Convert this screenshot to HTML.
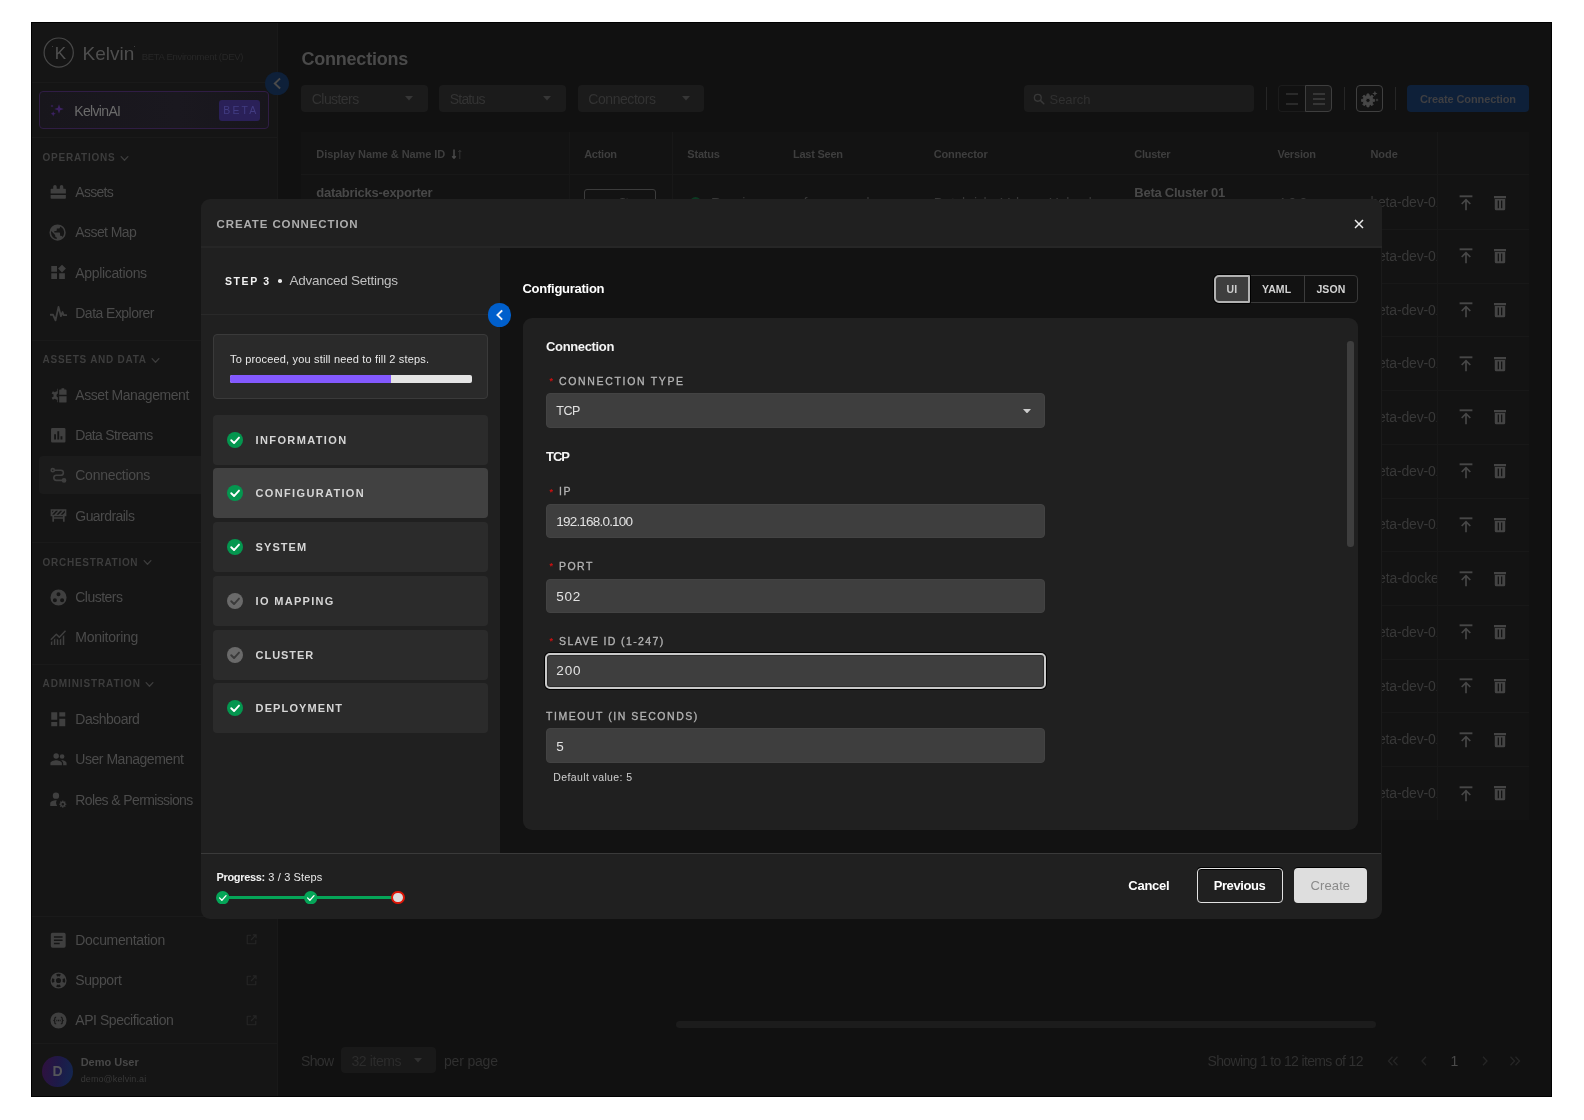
<!DOCTYPE html>
<html lang="en"><head><meta charset="utf-8"><title>Kelvin - Connections</title>
<style>
html,body{margin:0;padding:0;background:#fff;}
body{width:1584px;height:1120px;position:relative;overflow:hidden;font-family:"Liberation Sans",Arial,sans-serif;}
#root{position:absolute;left:0;top:0;width:1584px;height:1120px;will-change:transform;}
.b{position:absolute;box-sizing:border-box;display:block;}
.t{position:absolute;white-space:nowrap;display:block;}
</style></head><body>
<div id="root">
<div class="b" style="left:31.00px;top:22.00px;width:1521.00px;height:1075.00px;background:#111111;border:1px solid #000;"></div>
<div class="b" style="left:32.00px;top:23.00px;width:246.00px;height:1073.00px;background:#151515;border-right:1px solid #191919;"></div>
<svg class="b" style="left:43.00px;top:37.00px;" width="32" height="32" viewBox="0 0 32 32"><circle cx="15.7" cy="15.6" r="14.6" fill="none" stroke="#484848" stroke-width="1.2"/></svg>
<span class="t" style="left:54.80px;top:44px;font-size:17px;line-height:20px;color:#505050;letter-spacing:-0.739px;">K</span>
<div class="b" style="left:52.00px;top:45.60px;width:1.30px;height:1.30px;background:#505050;border-radius:1px;"></div>
<span class="t" style="left:82.50px;top:44px;font-size:19px;line-height:20px;color:#4e4e4e;letter-spacing:0.010px;">Kelvin</span>
<div class="b" style="left:134.20px;top:45.80px;width:1.30px;height:1.30px;background:#4e4e4e;border-radius:1px;"></div>
<span class="t" style="left:141.70px;top:47px;font-size:9.5px;line-height:20px;color:#272727;letter-spacing:-0.298px;">BETA Environment (DEV)</span>
<div class="b" style="left:32.00px;top:82.00px;width:245.00px;height:1.00px;background:#1a1a1a;"></div>
<div class="b" style="left:39.00px;top:91.30px;width:230.30px;height:38.00px;background:linear-gradient(90deg,#18161c,#1a181f 60%,#18161c);border:1px solid #301d45;border-radius:4px;"></div>
<svg class="b" style="left:49.00px;top:102.00px;" width="16" height="16" viewBox="0 0 16 16"><path d="M10 2.2 L11.2 5.8 L14.8 7 L11.2 8.2 L10 11.8 L8.8 8.2 L5.2 7 L8.8 5.8Z M4.2 9.2 L4.9 11.1 L6.8 11.8 L4.9 12.5 L4.2 14.4 L3.5 12.5 L1.6 11.8 L3.5 11.1Z M3 2.4 L3.45 3.55 L4.6 4 L3.45 4.45 L3 5.6 L2.55 4.45 L1.4 4 L2.55 3.55Z" fill="#3c2263"/></svg>
<span class="t" style="left:74.30px;top:101px;font-size:14px;line-height:20px;color:#6b6b6b;letter-spacing:-0.666px;">KelvinAI</span>
<div class="b" style="left:219.00px;top:100.00px;width:40.50px;height:20.50px;background:#2a2058;border-radius:3px;"></div>
<span class="t" style="left:223.30px;top:100px;font-size:10.5px;line-height:20px;color:#423c82;letter-spacing:2.085px;padding-left:0">BETA</span>
<div class="b" style="left:32.00px;top:137.00px;width:245.00px;height:1.00px;background:#1a1a1a;"></div>
<div class="b" style="left:265.30px;top:71.80px;width:23.40px;height:23.40px;background:#0e2039;border-radius:50%;"></div>
<svg class="b" style="left:265.50px;top:72.00px;" width="23" height="23" viewBox="0 0 23 23"><path d="M13.400 7.100 L8.800 11.500 L13.400 15.900" fill="none" stroke="#4a4a4a" stroke-width="1.900" stroke-linecap="square" stroke-linejoin="miter"/></svg>
<span class="t" style="left:42.60px;top:148px;font-size:10px;line-height:20px;color:#3d3d3d;font-weight:700;letter-spacing:0.736px;">OPERATIONS</span>
<svg class="b" style="left:119.70px;top:153.50px;" width="9" height="9" viewBox="0 0 9 9"><path d="M1.1 2.600 L4.5 6.200 L7.900 2.600" fill="none" stroke="#3d3d3d" stroke-width="1.3" stroke-linecap="round" stroke-linejoin="round"/></svg>
<svg class="b" style="left:49.75px;top:184.05px;" width="16.5" height="16.5" viewBox="0 0 16 16"><g fill="#3f3f3f" stroke="#3f3f3f" stroke-width="0" color="#3f3f3f"><path d="M1.400 4.600h1.700V2.700a1.700 1.700 0 0 1 3.400 0v1.900h3V2.700a1.700 1.700 0 0 1 3.400 0v1.900h1.700a.8.800 0 0 1 .8.800v3.800H.6V5.400a.8.8 0 0 1 .8-.8zM.6 10.600h14.800v3a.8.8 0 0 1-.8.800H1.400a.8.8 0 0 1-.8-.8z"/></g></svg>
<span class="t" style="left:75.30px;top:182px;font-size:14px;line-height:20px;color:#4b4b4b;letter-spacing:-0.723px;">Assets</span>
<svg class="b" style="left:49.40px;top:224.00px;" width="17.2" height="17.2" viewBox="0 0 16 16"><g fill="#3f3f3f" stroke="#3f3f3f" stroke-width="0" color="#3f3f3f"><path fill-rule="evenodd" d="M8 .4a7.600 7.600 0 1 0 0 15.200A7.600 7.600 0 0 0 8 .4zM1.900 8c0-.5.070-1 .18-1.400L5.700 10.200v.76c0 .84.700 1.520 1.520 1.520v1.560A6.100 6.100 0 0 1 1.900 8zm10.600 4.100a1.500 1.500 0 0 0-1.450-1.060h-.76V8.760a.76.760 0 0 0-.76-.76H4.960V6.480h1.520a.76.760 0 0 0 .76-.76V4.200h1.520c.84 0 1.520-.68 1.520-1.520v-.31A6.090 6.090 0 0 1 12.500 12.100z"/></g></svg>
<span class="t" style="left:75.30px;top:222px;font-size:14px;line-height:20px;color:#4b4b4b;letter-spacing:-0.580px;">Asset Map</span>
<svg class="b" style="left:49.50px;top:264.40px;" width="17" height="17" viewBox="0 0 16 16"><g fill="#3f3f3f" stroke="#3f3f3f" stroke-width="0" color="#3f3f3f"><path d="M1.200 1.800h5.400v5.400H1.200zM1.200 8.800h5.400v5.400H1.200zM8.600 8.800H14v5.400H8.600zM11.300 0.600l3.700 3.700-3.700 3.700-3.700-3.700z"/></g></svg>
<span class="t" style="left:75.30px;top:263px;font-size:14px;line-height:20px;color:#4b4b4b;letter-spacing:-0.335px;">Applications</span>
<svg class="b" style="left:49.50px;top:304.80px;" width="17" height="17" viewBox="0 0 16 16"><g fill="#3f3f3f" stroke="#3f3f3f" stroke-width="0" color="#3f3f3f"><path d="M.5 9.200h2.400l2.300 5.200L8 1.800l2.300 8.700 1.500-3.900 1.100 3h2.600" fill="none" stroke-width="1.700" stroke-linejoin="round" stroke-linecap="round"/></g></svg>
<span class="t" style="left:75.30px;top:303px;font-size:14px;line-height:20px;color:#4b4b4b;letter-spacing:-0.533px;">Data Explorer</span>
<div class="b" style="left:32.00px;top:340.00px;width:245.00px;height:1.00px;background:#1a1a1a;"></div>
<span class="t" style="left:42.60px;top:350px;font-size:10px;line-height:20px;color:#3d3d3d;font-weight:700;letter-spacing:0.732px;">ASSETS AND DATA</span>
<svg class="b" style="left:151.10px;top:355.70px;" width="9" height="9" viewBox="0 0 9 9"><path d="M1.1 2.600 L4.5 6.200 L7.900 2.600" fill="none" stroke="#3d3d3d" stroke-width="1.3" stroke-linecap="round" stroke-linejoin="round"/></svg>
<svg class="b" style="left:49.50px;top:386.50px;" width="17" height="17" viewBox="0 0 16 16"><g fill="#3f3f3f" stroke="#3f3f3f" stroke-width="0" color="#3f3f3f"><path d="M9.400 2.400h1.400V1.200h2.600v1.200h1.400a.8.800 0 0 1 .8.800v4H8.600v-4a.8.8 0 0 1 .8-.8zM8.600 8.800h7v5a.8.8 0 0 1-.8.800H9.400a.8.8 0 0 1-.8-.8z"/><path d="M6.800 1.600v2.500a3.600 3.600 0 0 0-2.200.900L2.700 3.900 1.500 6l1.900 1.100a3.600 3.600 0 0 0 0 1.800L1.500 10l1.200 2.100 1.900-1.100a3.600 3.600 0 0 0 2.200.9v2.500h.6V9.800a1.900 1.900 0 0 1 0-3.600V1.600z"/></g></svg>
<span class="t" style="left:75.30px;top:385px;font-size:14px;line-height:20px;color:#4b4b4b;letter-spacing:-0.441px;">Asset Management</span>
<svg class="b" style="left:49.75px;top:427.05px;" width="16.5" height="16.5" viewBox="0 0 16 16"><g fill="#3f3f3f" stroke="#3f3f3f" stroke-width="0" color="#3f3f3f"><path fill-rule="evenodd" d="M2.200 1h11.600A1.200 1.200 0 0 1 15 2.200v11.600A1.200 1.200 0 0 1 13.800 15H2.200A1.200 1.200 0 0 1 1 13.800V2.200A1.200 1.200 0 0 1 2.200 1zM4 7v5h1.800V7zM7.100 4v8h1.800V4zM10.200 9v3H12V9z"/></g></svg>
<span class="t" style="left:75.30px;top:425px;font-size:14px;line-height:20px;color:#4b4b4b;letter-spacing:-0.690px;">Data Streams</span>
<div class="b" style="left:39.00px;top:456.30px;width:232.00px;height:37.30px;background:#1b1b1b;border-radius:4px;"></div>
<svg class="b" style="left:49.50px;top:467.10px;" width="17" height="17" viewBox="0 0 16 16"><g fill="#3f3f3f" stroke="#3f3f3f" stroke-width="0" color="#3f3f3f"><g fill="none" stroke-width="1.500" stroke-linecap="round"><circle cx="2.600" cy="3" r="1.500"/><circle cx="13.200" cy="12.600" r="1.500" fill="currentColor"/><path d="M4.400 3h5.800a2.400 2.400 0 0 1 0 4.800H6a2.400 2.400 0 0 0 0 4.800h5.200"/></g></g></svg>
<span class="t" style="left:75.30px;top:465px;font-size:14px;line-height:20px;color:#4b4b4b;letter-spacing:-0.283px;">Connections</span>
<svg class="b" style="left:49.50px;top:507.40px;" width="17" height="17" viewBox="0 0 16 16"><g fill="#3f3f3f" stroke="#3f3f3f" stroke-width="0" color="#3f3f3f"><path fill-rule="evenodd" d="M.600 2.200h14.800v6.400h-1.600v5.200h-1.600V11H3.800v2.800H2.200V8.600H.6zM3.800 8.600v1h8.400v-1zM2 3.600v1.600l1.600-1.600zm3.600 0L2 7.200h2l3.600-3.600zm4 0L6 7.200h2l3.600-3.600zm4 0L10 7.200h2l2-2V3.600z"/></g></svg>
<span class="t" style="left:75.30px;top:506px;font-size:14px;line-height:20px;color:#4b4b4b;letter-spacing:-0.553px;">Guardrails</span>
<div class="b" style="left:32.00px;top:542.00px;width:245.00px;height:1.00px;background:#1a1a1a;"></div>
<span class="t" style="left:42.60px;top:553px;font-size:10px;line-height:20px;color:#3d3d3d;font-weight:700;letter-spacing:0.710px;">ORCHESTRATION</span>
<svg class="b" style="left:142.70px;top:558.40px;" width="9" height="9" viewBox="0 0 9 9"><path d="M1.1 2.600 L4.5 6.200 L7.900 2.600" fill="none" stroke="#3d3d3d" stroke-width="1.3" stroke-linecap="round" stroke-linejoin="round"/></svg>
<svg class="b" style="left:49.50px;top:588.80px;" width="17" height="17" viewBox="0 0 16 16"><g fill="#3f3f3f" stroke="#3f3f3f" stroke-width="0" color="#3f3f3f"><path fill-rule="evenodd" d="M8 .4a7.600 7.600 0 1 0 0 15.200A7.600 7.600 0 0 0 8 .4zM8 3a1.900 1.900 0 1 1 0 3.800A1.900 1.900 0 0 1 8 3zM4.600 8.600a1.900 1.900 0 1 1 0 3.800 1.900 1.900 0 0 1 0-3.800zm6.800 0a1.900 1.900 0 1 1 0 3.800 1.900 1.900 0 0 1 0-3.800z"/></g></svg>
<span class="t" style="left:75.30px;top:587px;font-size:14px;line-height:20px;color:#4b4b4b;letter-spacing:-0.535px;">Clusters</span>
<svg class="b" style="left:49.50px;top:629.10px;" width="17" height="17" viewBox="0 0 16 16"><g fill="#3f3f3f" stroke="#3f3f3f" stroke-width="0" color="#3f3f3f"><path d="M.800 15V12.400l1.400-1.400V15zM3.600 15V10l1.400-1.400V15zM6.400 15V9l1.400 1.400V15zM9.200 15V10l1.400-1.400V15zM12 15V7l1.400-1.400V15z"/><path d="M.800 10.200L6 5l2.800 2.800L14.600 1.600" fill="none" stroke-width="1.400" stroke-linejoin="round"/></g></svg>
<span class="t" style="left:75.30px;top:627px;font-size:14px;line-height:20px;color:#4b4b4b;letter-spacing:-0.263px;">Monitoring</span>
<div class="b" style="left:32.00px;top:664.00px;width:245.00px;height:1.00px;background:#1a1a1a;"></div>
<span class="t" style="left:42.60px;top:674px;font-size:10px;line-height:20px;color:#3d3d3d;font-weight:700;letter-spacing:0.883px;">ADMINISTRATION</span>
<svg class="b" style="left:145.10px;top:680.00px;" width="9" height="9" viewBox="0 0 9 9"><path d="M1.1 2.600 L4.5 6.200 L7.900 2.600" fill="none" stroke="#3d3d3d" stroke-width="1.3" stroke-linecap="round" stroke-linejoin="round"/></svg>
<svg class="b" style="left:49.75px;top:710.75px;" width="16.5" height="16.5" viewBox="0 0 16 16"><g fill="#3f3f3f" stroke="#3f3f3f" stroke-width="0" color="#3f3f3f"><path d="M1.200 1.200h5.800v7.400H1.200zM9 1.200h5.800v4.200H9zM1.200 10.600h5.800v4.200H1.200zM9 7.400h5.800v7.400H9z"/></g></svg>
<span class="t" style="left:75.30px;top:709px;font-size:14px;line-height:20px;color:#4b4b4b;letter-spacing:-0.486px;">Dashboard</span>
<svg class="b" style="left:49.50px;top:751.10px;" width="17" height="17" viewBox="0 0 16 16"><g fill="#3f3f3f" stroke="#3f3f3f" stroke-width="0" color="#3f3f3f"><path d="M5.800 7.400a2.600 2.600 0 1 0 0-5.200 2.600 2.600 0 0 0 0 5.200zM11.400 7.400a2.200 2.200 0 1 0 0-4.400 2.200 2.200 0 0 0 0 4.400zM5.800 8.800c-2 0-5.400 1-5.400 2.800V13.400h10.800v-1.800c0-1.800-3.400-2.800-5.400-2.800zM11.400 8.800c-.3 0-.6 0-.9.050 1.100.7 1.900 1.600 1.900 2.750v1.800h3.200v-1.800c0-1.800-2.600-2.800-4.200-2.800z"/></g></svg>
<span class="t" style="left:75.30px;top:749px;font-size:14px;line-height:20px;color:#4b4b4b;letter-spacing:-0.469px;">User Management</span>
<svg class="b" style="left:49.50px;top:791.40px;" width="17" height="17" viewBox="0 0 16 16"><g fill="#3f3f3f" stroke="#3f3f3f" stroke-width="0" color="#3f3f3f"><path d="M5.600 7.400a3 3 0 1 0 0-6 3 3 0 0 0 0 6zM6.400 8.800c-.3 0-.55-.03-.8-.03-2 0-5.400 1-5.400 3V14h6.600a4.700 4.700 0 0 1-.4-5.200z"/><path fill-rule="evenodd" d="M15.400 11.900l-.9-.15-.25-.6.5-.75-.7-.7-.75.5-.6-.25-.15-.9h-1l-.15.900-.6.250-.75-.5-.7.700.5.750-.25.600-.9.150v1l.9.150.25.600-.5.750.7.700.750-.5.600.250.150.900h1l.15-.9.600-.25.750.5.700-.7-.5-.75.250-.6.900-.15zM12.050 13.600a1.200 1.200 0 1 1 0-2.400 1.200 1.200 0 0 1 0 2.400z"/></g></svg>
<span class="t" style="left:75.30px;top:790px;font-size:14px;line-height:20px;color:#4b4b4b;letter-spacing:-0.620px;">Roles &amp; Permissions</span>
<div class="b" style="left:32.00px;top:916.00px;width:245.00px;height:1.00px;background:#1a1a1a;"></div>
<svg class="b" style="left:49.75px;top:931.75px;" width="16.5" height="16.5" viewBox="0 0 16 16"><g fill="#3f3f3f" stroke="#3f3f3f" stroke-width="0" color="#3f3f3f"><path fill-rule="evenodd" d="M2.400.800h11.200A1.600 1.600 0 0 1 15.200 2.400v11.200a1.600 1.600 0 0 1-1.600 1.600H2.400A1.600 1.600 0 0 1 .8 13.600V2.400A1.600 1.600 0 0 1 2.400.8zM3.800 4v1.500h8.400V4zm0 3.200v1.500h8.400V7.200zm0 3.200v1.500h5.600v-1.500z"/></g></svg>
<span class="t" style="left:75.30px;top:930px;font-size:14px;line-height:20px;color:#4b4b4b;letter-spacing:-0.347px;">Documentation</span>
<svg class="b" style="left:49.50px;top:971.80px;" width="17" height="17" viewBox="0 0 16 16"><g fill="#3f3f3f" stroke="#3f3f3f" stroke-width="0" color="#3f3f3f"><path fill-rule="evenodd" d="M8 .4a7.600 7.600 0 1 0 0 15.200A7.600 7.600 0 0 0 8 .4zM13.900 10.200l-2.100-.9a4 4 0 0 0 0-2.600l2.100-.9a6.100 6.100 0 0 1 0 4.400zM10.200 2.100l-.9 2.100a4 4 0 0 0-2.600 0l-.9-2.100a6.100 6.100 0 0 1 4.400 0zM2.100 5.800l2.100.9a4 4 0 0 0 0 2.600l-2.100.9a6.100 6.100 0 0 1 0-4.400zm3.700 8.100l.9-2.100a4 4 0 0 0 2.600 0l.9 2.100a6.100 6.100 0 0 1-4.400 0zM8 10.400a2.400 2.400 0 1 1 0-4.800 2.400 2.400 0 0 1 0 4.800z"/></g></svg>
<span class="t" style="left:75.30px;top:970px;font-size:14px;line-height:20px;color:#4b4b4b;letter-spacing:-0.406px;">Support</span>
<svg class="b" style="left:49.50px;top:1012.10px;" width="17" height="17" viewBox="0 0 16 16"><g fill="#3f3f3f" stroke="#3f3f3f" stroke-width="0" color="#3f3f3f"><path fill-rule="evenodd" d="M8 .4a7.600 7.600 0 1 0 0 15.200A7.600 7.600 0 0 0 8 .4zM5.800 4.400v.9c-.6 0-.8.2-.8.700v1.100c0 .5-.3.800-.7.900.4.100.7.400.7.900V10c0 .5.200.7.800.7v.9C4.600 11.600 4 11.100 4 10.100v-1c0-.5-.3-.7-.8-.7v-.8c.5 0 .8-.2.800-.7v-1c0-1 .6-1.500 1.800-1.500zm4.400 0c1.200 0 1.800.5 1.800 1.500v1c0 .5.300.7.800.7v.8c-.5 0-.8.2-.8.700v1c0 1-.6 1.500-1.800 1.500v-.9c.6 0 .8-.2.800-.7V8.900c0-.5.300-.8.700-.9-.4-.1-.7-.4-.7-.9V6c0-.5-.2-.7-.8-.7zM6 7.400h.9v1.200H6zm1.550 0h.9v1.200h-.9zm1.550 0H10v1.200h-.9z"/></g></svg>
<span class="t" style="left:75.30px;top:1010px;font-size:14px;line-height:20px;color:#4b4b4b;letter-spacing:-0.452px;">API Specification</span>
<svg class="b" style="left:246.00px;top:934.20px;" width="11" height="11" viewBox="0 0 11 11"><path d="M5 1.200H1.800a.6.6 0 0 0-.6.600v7.400a.6.6 0 0 0 .6.600h7.400a.6.6 0 0 0 .6-.6V6M6.800.900h3.300v3.300M10 1L5 6" fill="none" stroke="#262626" stroke-width="1.100"/></svg>
<svg class="b" style="left:246.00px;top:974.50px;" width="11" height="11" viewBox="0 0 11 11"><path d="M5 1.200H1.800a.6.6 0 0 0-.6.600v7.400a.6.6 0 0 0 .6.600h7.400a.6.6 0 0 0 .6-.6V6M6.800.900h3.300v3.300M10 1L5 6" fill="none" stroke="#262626" stroke-width="1.100"/></svg>
<svg class="b" style="left:246.00px;top:1014.80px;" width="11" height="11" viewBox="0 0 11 11"><path d="M5 1.200H1.800a.6.6 0 0 0-.6.600v7.400a.6.6 0 0 0 .6.600h7.400a.6.6 0 0 0 .6-.6V6M6.800.900h3.300v3.300M10 1L5 6" fill="none" stroke="#262626" stroke-width="1.100"/></svg>
<div class="b" style="left:32.00px;top:1042.50px;width:245.00px;height:1.00px;background:#1a1a1a;"></div>
<div class="b" style="left:42.20px;top:1055.50px;width:31.00px;height:31.00px;background:linear-gradient(100deg,#2d1240 10%,#1d1a48 55%,#13264f 95%);border-radius:50%;"></div>
<span class="t" style="left:52.60px;top:1061px;font-size:14px;line-height:20px;color:#55555a;font-weight:700;letter-spacing:0.290px;">D</span>
<span class="t" style="left:80.70px;top:1052px;font-size:11px;line-height:20px;color:#484848;font-weight:700;letter-spacing:-0.010px;">Demo User</span>
<span class="t" style="left:80.70px;top:1069px;font-size:9px;line-height:20px;color:#383838;letter-spacing:0.103px;">demo@kelvin.ai</span>
<span class="t" style="left:301.40px;top:49px;font-size:18px;line-height:20px;color:#4a4a4a;font-weight:700;letter-spacing:-0.210px;">Connections</span>
<div class="b" style="left:301.00px;top:85.00px;width:126.60px;height:27.00px;background:#1b1b1b;border-radius:4px;"></div>
<span class="t" style="left:311.80px;top:89px;font-size:14px;line-height:20px;color:#333333;letter-spacing:-0.564px;">Clusters</span>
<svg class="b" style="left:405.40px;top:96.00px;" width="8" height="4.5" viewBox="0 0 8 4.5"><path d="M0 0h8L4 4.5z" fill="#363636"/></svg>
<div class="b" style="left:439.00px;top:85.00px;width:126.80px;height:27.00px;background:#1b1b1b;border-radius:4px;"></div>
<span class="t" style="left:449.80px;top:89px;font-size:14px;line-height:20px;color:#333333;letter-spacing:-0.818px;">Status</span>
<svg class="b" style="left:543.30px;top:96.00px;" width="8" height="4.5" viewBox="0 0 8 4.5"><path d="M0 0h8L4 4.5z" fill="#363636"/></svg>
<div class="b" style="left:577.50px;top:85.00px;width:126.50px;height:27.00px;background:#1b1b1b;border-radius:4px;"></div>
<span class="t" style="left:588.30px;top:89px;font-size:14px;line-height:20px;color:#333333;letter-spacing:-0.444px;">Connectors</span>
<svg class="b" style="left:681.80px;top:96.00px;" width="8" height="4.5" viewBox="0 0 8 4.5"><path d="M0 0h8L4 4.5z" fill="#363636"/></svg>
<div class="b" style="left:1024.00px;top:85.00px;width:230.00px;height:27.00px;background:#1b1b1b;border-radius:4px;"></div>
<svg class="b" style="left:1033.00px;top:93.00px;" width="12" height="12" viewBox="0 0 12 12"><circle cx="4.800" cy="4.800" r="3.400" fill="none" stroke="#383838" stroke-width="1.400"/><path d="M7.400 7.400L10.800 10.800" stroke="#383838" stroke-width="1.500" stroke-linecap="round"/></svg>
<span class="t" style="left:1049.50px;top:90px;font-size:13px;line-height:20px;color:#303030;letter-spacing:-0.038px;">Search</span>
<div class="b" style="left:1265.90px;top:87.00px;width:1.00px;height:23.00px;background:#262626;"></div>
<div class="b" style="left:1343.80px;top:87.00px;width:1.00px;height:23.00px;background:#262626;"></div>
<div class="b" style="left:1394.50px;top:87.00px;width:1.00px;height:23.00px;background:#262626;"></div>
<div class="b" style="left:1278.40px;top:85.00px;width:27.50px;height:27.00px;border:1px solid #1c1c1c;border-right:none;border-radius:4px 0 0 4px;"></div>
<div class="b" style="left:1305.20px;top:85.00px;width:26.60px;height:27.00px;background:#1a1a1a;border:1px solid #3e3e3e;border-radius:0 4px 4px 0;"></div>
<div class="b" style="left:1286.00px;top:93.00px;width:12.00px;height:1.80px;background:#2a2a2a;"></div>
<div class="b" style="left:1286.00px;top:103.30px;width:12.00px;height:1.80px;background:#2a2a2a;"></div>
<div class="b" style="left:1312.80px;top:93.00px;width:11.80px;height:1.80px;background:#363636;"></div>
<div class="b" style="left:1312.80px;top:98.00px;width:11.80px;height:1.80px;background:#363636;"></div>
<div class="b" style="left:1312.80px;top:103.30px;width:11.80px;height:1.80px;background:#363636;"></div>
<div class="b" style="left:1356.00px;top:85.00px;width:27.00px;height:27.00px;background:#131313;border:1px solid #404040;border-radius:4px;"></div>
<svg class="b" style="left:1358.00px;top:88.00px;" width="24" height="24" viewBox="0 0 24 24"><path fill-rule="evenodd" fill="#474747" stroke="#474747" stroke-width="0.8" stroke-linejoin="round" d="M16.52 11.37L16.52 13.43L14.86 13.57L14.26 15.01L15.34 16.28L13.88 17.74L12.61 16.66L11.17 17.26L11.03 18.92L8.97 18.92L8.83 17.26L7.39 16.66L6.12 17.74L4.66 16.28L5.74 15.01L5.14 13.57L3.48 13.43L3.48 11.37L5.14 11.23L5.74 9.79L4.66 8.52L6.12 7.06L7.39 8.14L8.83 7.54L8.97 5.88L11.03 5.88L11.17 7.54L12.61 8.14L13.88 7.06L15.34 8.52L14.26 9.79L14.86 11.23ZM12.10 12.40A2.1 2.1 0 1 0 7.90 12.40A2.1 2.1 0 1 0 12.10 12.40Z"/><path fill="#474747" d="M16.9 2.8L17.66 4.74L19.599999999999998 5.5L17.66 6.26L16.9 8.2L16.14 6.26L14.2 5.5L16.14 4.74ZM19 10.3L19.48 11.52L20.7 12L19.48 12.48L19 13.7L18.52 12.48L17.3 12L18.52 11.52Z"/></svg>
<div class="b" style="left:1407.00px;top:85.00px;width:122.20px;height:27.00px;background:#0e2039;border-radius:4px;"></div>
<span class="t" style="left:1419.90px;top:89px;font-size:11px;line-height:20px;color:#3f3f42;font-weight:700;letter-spacing:-0.100px;">Create Connection</span>
<div class="b" style="left:301.00px;top:131.70px;width:1228.00px;height:43.50px;background:#131313;"></div>
<div class="b" style="left:301.00px;top:174.00px;width:1228.00px;height:2.00px;background:#181818;"></div>
<div class="b" style="left:301.00px;top:175.20px;width:1228.00px;height:53.72px;background:#131313;"></div>
<div class="b" style="left:301.00px;top:228.92px;width:1228.00px;height:53.72px;background:#131313;border-top:1px solid #181818;"></div>
<div class="b" style="left:301.00px;top:282.64px;width:1228.00px;height:53.72px;background:#131313;border-top:1px solid #181818;"></div>
<div class="b" style="left:301.00px;top:336.36px;width:1228.00px;height:53.72px;background:#131313;border-top:1px solid #181818;"></div>
<div class="b" style="left:301.00px;top:390.08px;width:1228.00px;height:53.72px;background:#131313;border-top:1px solid #181818;"></div>
<div class="b" style="left:301.00px;top:443.80px;width:1228.00px;height:53.72px;background:#131313;border-top:1px solid #181818;"></div>
<div class="b" style="left:301.00px;top:497.52px;width:1228.00px;height:53.72px;background:#131313;border-top:1px solid #181818;"></div>
<div class="b" style="left:301.00px;top:551.24px;width:1228.00px;height:53.72px;background:#131313;border-top:1px solid #181818;"></div>
<div class="b" style="left:301.00px;top:604.96px;width:1228.00px;height:53.72px;background:#131313;border-top:1px solid #181818;"></div>
<div class="b" style="left:301.00px;top:658.68px;width:1228.00px;height:53.72px;background:#131313;border-top:1px solid #181818;"></div>
<div class="b" style="left:301.00px;top:712.40px;width:1228.00px;height:53.72px;background:#131313;border-top:1px solid #181818;"></div>
<div class="b" style="left:301.00px;top:766.12px;width:1228.00px;height:53.72px;background:#131313;border-top:1px solid #181818;"></div>
<div class="b" style="left:568.50px;top:131.70px;width:1.00px;height:688.10px;background:#171717;"></div>
<div class="b" style="left:671.50px;top:131.70px;width:1.00px;height:688.10px;background:#181818;"></div>
<div class="b" style="left:1437.00px;top:131.70px;width:1.00px;height:688.10px;background:#181818;"></div>
<span class="t" style="left:316.30px;top:144px;font-size:11px;line-height:20px;color:#3e3e3e;font-weight:700;letter-spacing:-0.058px;">Display Name &amp; Name ID</span>
<svg class="b" style="left:451.00px;top:148.50px;" width="12" height="11" viewBox="0 0 12 11"><path d="M3 .5v8.500M1.200 7.200L3 9.200l1.800-2" fill="none" stroke="#4a4a4a" stroke-width="1.500"/><path d="M8.800 10V1.400M7.400 3L8.800 1.200 10.200 3" fill="none" stroke="#333" stroke-width="1"/></svg>
<span class="t" style="left:584.20px;top:144px;font-size:11px;line-height:20px;color:#3e3e3e;font-weight:700;letter-spacing:-0.264px;">Action</span>
<span class="t" style="left:687.30px;top:144px;font-size:11px;line-height:20px;color:#3e3e3e;font-weight:700;letter-spacing:-0.204px;">Status</span>
<span class="t" style="left:793.00px;top:144px;font-size:11px;line-height:20px;color:#3e3e3e;font-weight:700;letter-spacing:-0.246px;">Last Seen</span>
<span class="t" style="left:933.70px;top:144px;font-size:11px;line-height:20px;color:#3e3e3e;font-weight:700;letter-spacing:-0.125px;">Connector</span>
<span class="t" style="left:1134.30px;top:144px;font-size:11px;line-height:20px;color:#3e3e3e;font-weight:700;letter-spacing:-0.266px;">Cluster</span>
<span class="t" style="left:1277.40px;top:144px;font-size:11px;line-height:20px;color:#3e3e3e;font-weight:700;letter-spacing:-0.190px;">Version</span>
<span class="t" style="left:1370.40px;top:144px;font-size:11px;line-height:20px;color:#3e3e3e;font-weight:700;letter-spacing:0.033px;">Node</span>
<span class="t" style="left:316.30px;top:183px;font-size:13px;line-height:20px;color:#484848;font-weight:700;letter-spacing:-0.288px;">databricks-exporter</span>
<div class="b" style="left:584.20px;top:189.30px;width:71.70px;height:26.00px;border:1px solid #3c3c3c;border-radius:3px;"></div>
<span class="t" style="left:619.00px;top:192px;font-size:11px;line-height:20px;color:#3a3a3a;font-weight:700;letter-spacing:-1.146px;">Stop</span>
<div class="b" style="left:690.00px;top:197.00px;width:11.00px;height:11.00px;background:#0c3a22;border-radius:50%;"></div>
<span class="t" style="left:711.00px;top:193px;font-size:14px;line-height:20px;color:#383838;letter-spacing:-0.525px;">Running</span>
<span class="t" style="left:793.00px;top:193px;font-size:14px;line-height:20px;color:#383838;letter-spacing:-0.547px;">a few seconds ago</span>
<span class="t" style="left:933.70px;top:193px;font-size:14px;line-height:20px;color:#383838;letter-spacing:-0.303px;">Databricks Volume Upload</span>
<span class="t" style="left:1134.30px;top:183px;font-size:13px;line-height:20px;color:#484848;font-weight:700;letter-spacing:-0.261px;">Beta Cluster 01</span>
<span class="t" style="left:1277.40px;top:193px;font-size:14px;line-height:20px;color:#383838;letter-spacing:-0.284px;">4.0.2</span>
<div class="b" style="left:1370px;top:190.10px;width:66.5px;height:24px;overflow:hidden;">
<span class="t" style="left:0.40px;top:2px;font-size:14px;line-height:20px;color:#383838;letter-spacing:-0.172px;">beta-dev-01</span>
</div>
<svg class="b" style="left:1458.50px;top:194.60px;" width="14" height="16" viewBox="0 0 14 16"><path d="M.6 1.300h12.800" stroke="#474747" stroke-width="1.900" fill="none"/><path d="M7 15.200V5M2.700 9L7 4.700 11.300 9" stroke="#474747" stroke-width="1.700" fill="none"/></svg>
<svg class="b" style="left:1493.00px;top:194.50px;" width="14" height="16" viewBox="0 0 14 16"><path fill-rule="evenodd" fill="#444444" d="M1 .900h12v2.300H1zM1.800 3.900h10.400v10a1.300 1.300 0 0 1-1.300 1.300H3.100a1.300 1.300 0 0 1-1.300-1.300zM4.700 5.600v7.600h1.300V5.600zm3.300 0v7.600h1.300V5.600z"/></svg>
<div class="b" style="left:1370px;top:243.82px;width:66.5px;height:24px;overflow:hidden;">
<span class="t" style="left:0.40px;top:2px;font-size:14px;line-height:20px;color:#383838;letter-spacing:-0.172px;">beta-dev-01</span>
</div>
<svg class="b" style="left:1458.50px;top:248.32px;" width="14" height="16" viewBox="0 0 14 16"><path d="M.6 1.300h12.800" stroke="#474747" stroke-width="1.900" fill="none"/><path d="M7 15.200V5M2.700 9L7 4.700 11.300 9" stroke="#474747" stroke-width="1.700" fill="none"/></svg>
<svg class="b" style="left:1493.00px;top:248.22px;" width="14" height="16" viewBox="0 0 14 16"><path fill-rule="evenodd" fill="#444444" d="M1 .900h12v2.300H1zM1.800 3.900h10.400v10a1.300 1.300 0 0 1-1.300 1.300H3.100a1.300 1.300 0 0 1-1.300-1.300zM4.700 5.600v7.600h1.300V5.600zm3.300 0v7.600h1.300V5.600z"/></svg>
<div class="b" style="left:1370px;top:297.54px;width:66.5px;height:24px;overflow:hidden;">
<span class="t" style="left:0.40px;top:2px;font-size:14px;line-height:20px;color:#383838;letter-spacing:-0.172px;">beta-dev-01</span>
</div>
<svg class="b" style="left:1458.50px;top:302.04px;" width="14" height="16" viewBox="0 0 14 16"><path d="M.6 1.300h12.800" stroke="#474747" stroke-width="1.900" fill="none"/><path d="M7 15.200V5M2.700 9L7 4.700 11.300 9" stroke="#474747" stroke-width="1.700" fill="none"/></svg>
<svg class="b" style="left:1493.00px;top:301.94px;" width="14" height="16" viewBox="0 0 14 16"><path fill-rule="evenodd" fill="#444444" d="M1 .900h12v2.300H1zM1.800 3.900h10.400v10a1.300 1.300 0 0 1-1.300 1.300H3.100a1.300 1.300 0 0 1-1.300-1.300zM4.700 5.600v7.600h1.300V5.600zm3.300 0v7.600h1.300V5.600z"/></svg>
<div class="b" style="left:1370px;top:351.26px;width:66.5px;height:24px;overflow:hidden;">
<span class="t" style="left:0.40px;top:2px;font-size:14px;line-height:20px;color:#383838;letter-spacing:-0.172px;">beta-dev-01</span>
</div>
<svg class="b" style="left:1458.50px;top:355.76px;" width="14" height="16" viewBox="0 0 14 16"><path d="M.6 1.300h12.800" stroke="#474747" stroke-width="1.900" fill="none"/><path d="M7 15.200V5M2.700 9L7 4.700 11.300 9" stroke="#474747" stroke-width="1.700" fill="none"/></svg>
<svg class="b" style="left:1493.00px;top:355.66px;" width="14" height="16" viewBox="0 0 14 16"><path fill-rule="evenodd" fill="#444444" d="M1 .900h12v2.300H1zM1.800 3.900h10.400v10a1.300 1.300 0 0 1-1.300 1.300H3.100a1.300 1.300 0 0 1-1.300-1.300zM4.700 5.600v7.600h1.300V5.600zm3.300 0v7.600h1.300V5.600z"/></svg>
<div class="b" style="left:1370px;top:404.98px;width:66.5px;height:24px;overflow:hidden;">
<span class="t" style="left:0.40px;top:2px;font-size:14px;line-height:20px;color:#383838;letter-spacing:-0.172px;">beta-dev-01</span>
</div>
<svg class="b" style="left:1458.50px;top:409.48px;" width="14" height="16" viewBox="0 0 14 16"><path d="M.6 1.300h12.800" stroke="#474747" stroke-width="1.900" fill="none"/><path d="M7 15.200V5M2.700 9L7 4.700 11.300 9" stroke="#474747" stroke-width="1.700" fill="none"/></svg>
<svg class="b" style="left:1493.00px;top:409.38px;" width="14" height="16" viewBox="0 0 14 16"><path fill-rule="evenodd" fill="#444444" d="M1 .900h12v2.300H1zM1.800 3.900h10.400v10a1.300 1.300 0 0 1-1.300 1.300H3.100a1.300 1.300 0 0 1-1.300-1.300zM4.700 5.600v7.600h1.300V5.600zm3.300 0v7.600h1.300V5.600z"/></svg>
<div class="b" style="left:1370px;top:458.70px;width:66.5px;height:24px;overflow:hidden;">
<span class="t" style="left:0.40px;top:2px;font-size:14px;line-height:20px;color:#383838;letter-spacing:-0.172px;">beta-dev-01</span>
</div>
<svg class="b" style="left:1458.50px;top:463.20px;" width="14" height="16" viewBox="0 0 14 16"><path d="M.6 1.300h12.800" stroke="#474747" stroke-width="1.900" fill="none"/><path d="M7 15.200V5M2.700 9L7 4.700 11.300 9" stroke="#474747" stroke-width="1.700" fill="none"/></svg>
<svg class="b" style="left:1493.00px;top:463.10px;" width="14" height="16" viewBox="0 0 14 16"><path fill-rule="evenodd" fill="#444444" d="M1 .900h12v2.300H1zM1.800 3.900h10.400v10a1.300 1.300 0 0 1-1.300 1.300H3.100a1.300 1.300 0 0 1-1.300-1.300zM4.700 5.600v7.600h1.300V5.600zm3.300 0v7.600h1.300V5.600z"/></svg>
<div class="b" style="left:1370px;top:512.42px;width:66.5px;height:24px;overflow:hidden;">
<span class="t" style="left:0.40px;top:2px;font-size:14px;line-height:20px;color:#383838;letter-spacing:-0.172px;">beta-dev-01</span>
</div>
<svg class="b" style="left:1458.50px;top:516.92px;" width="14" height="16" viewBox="0 0 14 16"><path d="M.6 1.300h12.800" stroke="#474747" stroke-width="1.900" fill="none"/><path d="M7 15.200V5M2.700 9L7 4.700 11.300 9" stroke="#474747" stroke-width="1.700" fill="none"/></svg>
<svg class="b" style="left:1493.00px;top:516.82px;" width="14" height="16" viewBox="0 0 14 16"><path fill-rule="evenodd" fill="#444444" d="M1 .900h12v2.300H1zM1.800 3.900h10.400v10a1.300 1.300 0 0 1-1.300 1.300H3.100a1.300 1.300 0 0 1-1.300-1.300zM4.700 5.600v7.600h1.300V5.600zm3.300 0v7.600h1.300V5.600z"/></svg>
<div class="b" style="left:1370px;top:566.14px;width:66.5px;height:24px;overflow:hidden;">
<span class="t" style="left:0.40px;top:2px;font-size:14px;line-height:20px;color:#383838;letter-spacing:-0.090px;">beta-docker-01</span>
</div>
<svg class="b" style="left:1458.50px;top:570.64px;" width="14" height="16" viewBox="0 0 14 16"><path d="M.6 1.300h12.800" stroke="#474747" stroke-width="1.900" fill="none"/><path d="M7 15.200V5M2.700 9L7 4.700 11.300 9" stroke="#474747" stroke-width="1.700" fill="none"/></svg>
<svg class="b" style="left:1493.00px;top:570.54px;" width="14" height="16" viewBox="0 0 14 16"><path fill-rule="evenodd" fill="#444444" d="M1 .900h12v2.300H1zM1.800 3.900h10.400v10a1.300 1.300 0 0 1-1.300 1.300H3.100a1.300 1.300 0 0 1-1.300-1.300zM4.700 5.600v7.600h1.300V5.600zm3.300 0v7.600h1.300V5.600z"/></svg>
<div class="b" style="left:1370px;top:619.86px;width:66.5px;height:24px;overflow:hidden;">
<span class="t" style="left:0.40px;top:2px;font-size:14px;line-height:20px;color:#383838;letter-spacing:-0.172px;">beta-dev-01</span>
</div>
<svg class="b" style="left:1458.50px;top:624.36px;" width="14" height="16" viewBox="0 0 14 16"><path d="M.6 1.300h12.800" stroke="#474747" stroke-width="1.900" fill="none"/><path d="M7 15.200V5M2.700 9L7 4.700 11.300 9" stroke="#474747" stroke-width="1.700" fill="none"/></svg>
<svg class="b" style="left:1493.00px;top:624.26px;" width="14" height="16" viewBox="0 0 14 16"><path fill-rule="evenodd" fill="#444444" d="M1 .900h12v2.300H1zM1.800 3.900h10.400v10a1.300 1.300 0 0 1-1.300 1.300H3.100a1.300 1.300 0 0 1-1.300-1.300zM4.700 5.600v7.600h1.300V5.600zm3.300 0v7.600h1.300V5.600z"/></svg>
<div class="b" style="left:1370px;top:673.58px;width:66.5px;height:24px;overflow:hidden;">
<span class="t" style="left:0.40px;top:2px;font-size:14px;line-height:20px;color:#383838;letter-spacing:-0.172px;">beta-dev-01</span>
</div>
<svg class="b" style="left:1458.50px;top:678.08px;" width="14" height="16" viewBox="0 0 14 16"><path d="M.6 1.300h12.800" stroke="#474747" stroke-width="1.900" fill="none"/><path d="M7 15.200V5M2.700 9L7 4.700 11.300 9" stroke="#474747" stroke-width="1.700" fill="none"/></svg>
<svg class="b" style="left:1493.00px;top:677.98px;" width="14" height="16" viewBox="0 0 14 16"><path fill-rule="evenodd" fill="#444444" d="M1 .900h12v2.300H1zM1.800 3.900h10.400v10a1.300 1.300 0 0 1-1.300 1.300H3.100a1.300 1.300 0 0 1-1.300-1.300zM4.700 5.600v7.600h1.300V5.600zm3.300 0v7.600h1.300V5.600z"/></svg>
<div class="b" style="left:1370px;top:727.30px;width:66.5px;height:24px;overflow:hidden;">
<span class="t" style="left:0.40px;top:2px;font-size:14px;line-height:20px;color:#383838;letter-spacing:-0.172px;">beta-dev-01</span>
</div>
<svg class="b" style="left:1458.50px;top:731.80px;" width="14" height="16" viewBox="0 0 14 16"><path d="M.6 1.300h12.800" stroke="#474747" stroke-width="1.900" fill="none"/><path d="M7 15.200V5M2.700 9L7 4.700 11.300 9" stroke="#474747" stroke-width="1.700" fill="none"/></svg>
<svg class="b" style="left:1493.00px;top:731.70px;" width="14" height="16" viewBox="0 0 14 16"><path fill-rule="evenodd" fill="#444444" d="M1 .900h12v2.300H1zM1.800 3.900h10.400v10a1.300 1.300 0 0 1-1.300 1.300H3.100a1.300 1.300 0 0 1-1.300-1.300zM4.700 5.600v7.600h1.300V5.600zm3.300 0v7.600h1.300V5.600z"/></svg>
<div class="b" style="left:1370px;top:781.02px;width:66.5px;height:24px;overflow:hidden;">
<span class="t" style="left:0.40px;top:2px;font-size:14px;line-height:20px;color:#383838;letter-spacing:-0.172px;">beta-dev-01</span>
</div>
<svg class="b" style="left:1458.50px;top:785.52px;" width="14" height="16" viewBox="0 0 14 16"><path d="M.6 1.300h12.800" stroke="#474747" stroke-width="1.900" fill="none"/><path d="M7 15.200V5M2.700 9L7 4.700 11.300 9" stroke="#474747" stroke-width="1.700" fill="none"/></svg>
<svg class="b" style="left:1493.00px;top:785.42px;" width="14" height="16" viewBox="0 0 14 16"><path fill-rule="evenodd" fill="#444444" d="M1 .900h12v2.300H1zM1.800 3.900h10.400v10a1.300 1.300 0 0 1-1.300 1.300H3.100a1.300 1.300 0 0 1-1.300-1.300zM4.700 5.600v7.600h1.300V5.600zm3.300 0v7.600h1.300V5.600z"/></svg>
<div class="b" style="left:676.00px;top:1021.00px;width:700.00px;height:7.40px;background:#1c1c1c;border-radius:3.7px;"></div>
<span class="t" style="left:301.00px;top:1051px;font-size:14px;line-height:20px;color:#303030;letter-spacing:-0.674px;">Show</span>
<div class="b" style="left:340.70px;top:1046.70px;width:95.50px;height:26.60px;background:#191919;border-radius:4px;"></div>
<span class="t" style="left:351.50px;top:1051px;font-size:14px;line-height:20px;color:#2c2c2c;letter-spacing:-0.416px;">32 items</span>
<svg class="b" style="left:414.00px;top:1058.00px;" width="8" height="4.5" viewBox="0 0 8 4.5"><path d="M0 0h8L4 4.5z" fill="#303030"/></svg>
<span class="t" style="left:444.00px;top:1051px;font-size:14px;line-height:20px;color:#303030;letter-spacing:-0.181px;">per page</span>
<span class="t" style="left:1207.50px;top:1051px;font-size:14px;line-height:20px;color:#303030;letter-spacing:-0.645px;">Showing 1 to 12 items of 12</span>
<svg class="b" style="left:1386.00px;top:1054.50px;" width="14" height="12" viewBox="-7 -6 14 12"><path d="M4.5 -4.2L0.5 0.0L4.5 4.2M-0.5 -4.2L-4.5 0.0L-0.5 4.2" fill="none" stroke="#262626" stroke-width="1.300"/></svg>
<svg class="b" style="left:1416.50px;top:1054.50px;" width="14" height="12" viewBox="-7 -6 14 12"><path d="M2.0 -4.2L-2.0 0.0L2.0 4.2" fill="none" stroke="#262626" stroke-width="1.300"/></svg>
<span class="t" style="left:1450.50px;top:1051px;font-size:14px;line-height:20px;color:#4a4a4a;letter-spacing:-1.286px;">1</span>
<svg class="b" style="left:1477.50px;top:1054.50px;" width="14" height="12" viewBox="-7 -6 14 12"><path d="M-2.0 -4.2L2.0 0.0L-2.0 4.2" fill="none" stroke="#262626" stroke-width="1.300"/></svg>
<svg class="b" style="left:1508.00px;top:1054.50px;" width="14" height="12" viewBox="-7 -6 14 12"><path d="M-4.5 -4.2L-0.5 0.0L-4.5 4.2M0.5 -4.2L4.5 0.0L0.5 4.2" fill="none" stroke="#262626" stroke-width="1.300"/></svg>
<div class="b" style="left:201px;top:199.200px;width:1181px;height:720px;background:#202020;border-radius:9px;overflow:hidden;">
<div class="b" style="left:299.00px;top:48.80px;width:882.00px;height:605.50px;background:#121212;"></div>
<div class="b" style="left:1180.00px;top:48.40px;width:1.00px;height:606.00px;background:#1b1b1b;"></div>
<div class="b" style="left:0.00px;top:46.80px;width:1181.00px;height:2.00px;background:#262626;"></div>
<span class="t" style="left:15.60px;top:15px;font-size:11.5px;line-height:20px;color:#adadad;font-weight:700;letter-spacing:0.880px;">CREATE CONNECTION</span>
<svg class="b" style="left:1152.00px;top:18.50px;" width="12" height="12" viewBox="0 0 12 12"><path d="M2 2L10 10M10 2L2 10" stroke="#ececec" stroke-width="1.450" fill="none"/></svg>
<div class="b" style="left:0.00px;top:48.80px;width:299.00px;height:605.50px;background:#202020;"></div>
<span class="t" style="left:23.90px;top:72px;font-size:10.5px;line-height:20px;color:#f2f2f2;font-weight:700;letter-spacing:1.642px;">STEP 3</span>
<div class="b" style="left:77.00px;top:80.30px;width:3.60px;height:3.60px;background:#e8e8e8;border-radius:50%;"></div>
<span class="t" style="left:88.50px;top:72px;font-size:13.5px;line-height:20px;color:#c0c0c0;letter-spacing:-0.255px;">Advanced Settings</span>
<div class="b" style="left:0.00px;top:114.80px;width:299.00px;height:1.00px;background:#292929;"></div>
<div class="b" style="left:12.20px;top:134.80px;width:274.80px;height:64.60px;background:#2a2a2a;border:1px solid #3a3a3a;border-radius:4px;"></div>
<span class="t" style="left:29.00px;top:150px;font-size:11px;line-height:20px;color:#e8e8e8;letter-spacing:0.167px;">To proceed, you still need to fill 2 steps.</span>
<div class="b" style="left:29.00px;top:175.60px;width:242.40px;height:8.20px;background:#e4e4e4;border-radius:2px;overflow:hidden;"><div style="width:161px;height:100%;background:#8359ff"></div></div>
<div class="b" style="left:12.20px;top:215.80px;width:274.80px;height:50.00px;background:#2b2b2b;border-radius:4px;"></div>
<svg class="b" style="left:25.60px;top:232.90px;" width="16" height="16" viewBox="-8 -8 16 16"><circle r="8" fill="#04964f"/><path d="M-3.76 0.24L-0.96 3.04L4.00 -2.40" fill="none" stroke="#ffffff" stroke-width="1.9" stroke-linecap="round" stroke-linejoin="round"/></svg>
<span class="t" style="left:54.60px;top:231px;font-size:11px;line-height:20px;color:#d6d6d6;font-weight:700;letter-spacing:1.371px;">INFORMATION</span>
<div class="b" style="left:12.20px;top:268.80px;width:274.80px;height:50.00px;background:#414141;border-radius:4px;"></div>
<svg class="b" style="left:25.60px;top:285.90px;" width="16" height="16" viewBox="-8 -8 16 16"><circle r="8" fill="#04964f"/><path d="M-3.76 0.24L-0.96 3.04L4.00 -2.40" fill="none" stroke="#ffffff" stroke-width="1.9" stroke-linecap="round" stroke-linejoin="round"/></svg>
<span class="t" style="left:54.60px;top:284px;font-size:11px;line-height:20px;color:#d6d6d6;font-weight:700;letter-spacing:1.336px;">CONFIGURATION</span>
<div class="b" style="left:12.20px;top:322.80px;width:274.80px;height:50.00px;background:#2b2b2b;border-radius:4px;"></div>
<svg class="b" style="left:25.60px;top:339.90px;" width="16" height="16" viewBox="-8 -8 16 16"><circle r="8" fill="#04964f"/><path d="M-3.76 0.24L-0.96 3.04L4.00 -2.40" fill="none" stroke="#ffffff" stroke-width="1.9" stroke-linecap="round" stroke-linejoin="round"/></svg>
<span class="t" style="left:54.60px;top:338px;font-size:11px;line-height:20px;color:#d6d6d6;font-weight:700;letter-spacing:1.054px;">SYSTEM</span>
<div class="b" style="left:12.20px;top:376.80px;width:274.80px;height:50.00px;background:#2b2b2b;border-radius:4px;"></div>
<svg class="b" style="left:25.60px;top:393.90px;" width="16" height="16" viewBox="-8 -8 16 16"><circle r="8" fill="#6a6a6a"/><path d="M-3.76 0.24L-0.96 3.04L4.00 -2.40" fill="none" stroke="#3a3a3a" stroke-width="1.9" stroke-linecap="round" stroke-linejoin="round"/></svg>
<span class="t" style="left:54.60px;top:392px;font-size:11px;line-height:20px;color:#d6d6d6;font-weight:700;letter-spacing:1.310px;">IO MAPPING</span>
<div class="b" style="left:12.20px;top:430.80px;width:274.80px;height:50.00px;background:#2b2b2b;border-radius:4px;"></div>
<svg class="b" style="left:25.60px;top:447.90px;" width="16" height="16" viewBox="-8 -8 16 16"><circle r="8" fill="#6a6a6a"/><path d="M-3.76 0.24L-0.96 3.04L4.00 -2.40" fill="none" stroke="#3a3a3a" stroke-width="1.9" stroke-linecap="round" stroke-linejoin="round"/></svg>
<span class="t" style="left:54.60px;top:446px;font-size:11px;line-height:20px;color:#d6d6d6;font-weight:700;letter-spacing:0.943px;">CLUSTER</span>
<div class="b" style="left:12.20px;top:483.80px;width:274.80px;height:50.00px;background:#2b2b2b;border-radius:4px;"></div>
<svg class="b" style="left:25.60px;top:500.90px;" width="16" height="16" viewBox="-8 -8 16 16"><circle r="8" fill="#04964f"/><path d="M-3.76 0.24L-0.96 3.04L4.00 -2.40" fill="none" stroke="#ffffff" stroke-width="1.9" stroke-linecap="round" stroke-linejoin="round"/></svg>
<span class="t" style="left:54.60px;top:499px;font-size:11px;line-height:20px;color:#d6d6d6;font-weight:700;letter-spacing:1.112px;">DEPLOYMENT</span>
<div class="b" style="left:0.00px;top:653.80px;width:1180.40px;height:1.00px;background:#3a3a3a;"></div>
<span class="t" style="left:15.60px;top:668px;font-size:11px;line-height:20px;color:#f4f4f4;font-weight:700;letter-spacing:-0.357px;">Progress:</span>
<span class="t" style="left:67.30px;top:668px;font-size:11px;line-height:20px;color:#e8e8e8;letter-spacing:0.141px;">3 / 3 Steps</span>
<div class="b" style="left:22.00px;top:696.80px;width:175.00px;height:3.00px;background:#05a558;"></div>
<svg class="b" style="left:15.20px;top:691.70px;" width="13.4" height="13.4" viewBox="-6.7 -6.7 13.4 13.4"><circle r="6.7" fill="#05a558"/><path d="M-3.15 0.20L-0.80 2.55L3.35 -2.01" fill="none" stroke="#ffffff" stroke-width="1.3" stroke-linecap="round" stroke-linejoin="round"/></svg>
<svg class="b" style="left:102.70px;top:691.70px;" width="13.4" height="13.4" viewBox="-6.7 -6.7 13.4 13.4"><circle r="6.7" fill="#05a558"/><path d="M-3.15 0.20L-0.80 2.55L3.35 -2.01" fill="none" stroke="#ffffff" stroke-width="1.3" stroke-linecap="round" stroke-linejoin="round"/></svg>
<div class="b" style="left:190.30px;top:691.60px;width:13.40px;height:13.40px;background:#dcdcdc;border:2px solid #de1607;border-radius:50%;"></div>
<span class="t" style="left:927.30px;top:677px;font-size:13px;line-height:20px;color:#ffffff;font-weight:700;letter-spacing:-0.246px;">Cancel</span>
<div class="b" style="left:996.40px;top:668.80px;width:85.20px;height:35.20px;background:#202020;border:1.5px solid #e2e2e2;border-radius:4px;box-shadow:0 -1px 0 0 #000,inset 0 1px 0 0 #000;"></div>
<span class="t" style="left:1012.70px;top:677px;font-size:13px;line-height:20px;color:#ffffff;font-weight:700;letter-spacing:-0.416px;">Previous</span>
<div class="b" style="left:1092.50px;top:668.80px;width:73.70px;height:35.20px;background:#dedede;border-radius:4px;box-shadow:0 -1px 0 0 #000;"></div>
<span class="t" style="left:1109.50px;top:677px;font-size:13px;line-height:20px;color:#8a8a8a;letter-spacing:0.116px;">Create</span>
<span class="t" style="left:321.50px;top:80px;font-size:13px;line-height:20px;color:#ffffff;font-weight:700;letter-spacing:-0.267px;">Configuration</span>
<div class="b" style="left:1013.00px;top:76.10px;width:144.00px;height:27.30px;border:1px solid #393939;border-radius:4px;"></div>
<div class="b" style="left:1013.00px;top:75.80px;width:36.00px;height:27.70px;background:#3e3e3e;border:2px solid #b2b2b2;border-radius:5px 1px 1px 5px;box-shadow:0 0 0 1px #000;"></div>
<div class="b" style="left:1102.70px;top:76.10px;width:1.00px;height:27.30px;background:#3c3c3c;"></div>
<span class="t" style="left:1025.40px;top:80px;font-size:10.5px;line-height:20px;color:#cdcdcd;font-weight:700;letter-spacing:0.200px;">UI</span>
<span class="t" style="left:1061.10px;top:80px;font-size:10.5px;line-height:20px;color:#d4d4d4;font-weight:700;letter-spacing:0.072px;">YAML</span>
<span class="t" style="left:1115.40px;top:80px;font-size:10.5px;line-height:20px;color:#d4d4d4;font-weight:700;letter-spacing:0.136px;">JSON</span>
<div class="b" style="left:321.70px;top:118.80px;width:835.30px;height:511.70px;background:#202020;border-radius:9px;"></div>
<div class="b" style="left:1146.40px;top:141.80px;width:6.60px;height:206.50px;background:#3e3e3e;border-radius:3.3px;"></div>
<span class="t" style="left:345.00px;top:138px;font-size:13px;line-height:20px;color:#f4f4f4;font-weight:700;letter-spacing:-0.344px;">Connection</span>
<span class="t" style="left:345.00px;top:248px;font-size:13px;line-height:20px;color:#f4f4f4;font-weight:700;letter-spacing:-1.000px;">TCP</span>
<span class="t" style="left:348.50px;top:172px;font-size:9px;line-height:20px;color:#cc1010;font-weight:700;">*</span>
<span class="t" style="left:358.00px;top:172px;font-size:10.5px;line-height:20px;color:#b4b4b4;letter-spacing:1.669px;-webkit-text-stroke:0.3px #b4b4b4;">CONNECTION TYPE</span>
<div class="b" style="left:345.00px;top:194.20px;width:499.00px;height:34.40px;background:#3e3e3e;border:1px solid #434343;border-radius:4px;"></div>
<span class="t" style="left:355.30px;top:202px;font-size:12.5px;line-height:20px;color:#e2e2e2;letter-spacing:-0.500px;">TCP</span>
<svg class="b" style="left:821.50px;top:209.60px;" width="8" height="4.5" viewBox="0 0 8 4.5"><path d="M0 0h8L4 4.500z" fill="#cccccc"/></svg>
<span class="t" style="left:348.50px;top:283px;font-size:9px;line-height:20px;color:#cc1010;font-weight:700;">*</span>
<span class="t" style="left:358.00px;top:282px;font-size:10.5px;line-height:20px;color:#b4b4b4;letter-spacing:1.579px;-webkit-text-stroke:0.3px #b4b4b4;">IP</span>
<div class="b" style="left:345.00px;top:304.80px;width:499.00px;height:34.40px;background:#3e3e3e;border:1px solid #434343;border-radius:4px;"></div>
<span class="t" style="left:355.30px;top:313px;font-size:13.5px;line-height:20px;color:#e2e2e2;letter-spacing:-0.803px;">192.168.0.100</span>
<span class="t" style="left:348.50px;top:357px;font-size:9px;line-height:20px;color:#cc1010;font-weight:700;">*</span>
<span class="t" style="left:358.00px;top:357px;font-size:10.5px;line-height:20px;color:#b4b4b4;letter-spacing:1.441px;-webkit-text-stroke:0.3px #b4b4b4;">PORT</span>
<div class="b" style="left:345.00px;top:379.60px;width:499.00px;height:34.40px;background:#3e3e3e;border:1px solid #434343;border-radius:4px;"></div>
<span class="t" style="left:355.30px;top:388px;font-size:13.5px;line-height:20px;color:#e2e2e2;letter-spacing:0.738px;">502</span>
<span class="t" style="left:348.50px;top:432px;font-size:9px;line-height:20px;color:#cc1010;font-weight:700;">*</span>
<span class="t" style="left:358.00px;top:432px;font-size:10.5px;line-height:20px;color:#b4b4b4;letter-spacing:1.403px;-webkit-text-stroke:0.3px #b4b4b4;">SLAVE ID (1-247)</span>
<div class="b" style="left:344.00px;top:454.00px;width:500.60px;height:35.80px;background:#3e3e3e;border:2px solid #c9c9c9;border-radius:5px;box-shadow:0 0 0 1px #000,inset 0 0 0 1px #2c2c2c;"></div>
<span class="t" style="left:355.30px;top:462px;font-size:13.5px;line-height:20px;color:#e2e2e2;letter-spacing:0.888px;">200</span>
<span class="t" style="left:345.00px;top:507px;font-size:10.5px;line-height:20px;color:#b4b4b4;letter-spacing:1.526px;-webkit-text-stroke:0.3px #b4b4b4;">TIMEOUT (IN SECONDS)</span>
<div class="b" style="left:345.00px;top:529.30px;width:499.00px;height:34.40px;background:#3e3e3e;border:1px solid #434343;border-radius:4px;"></div>
<span class="t" style="left:355.30px;top:538px;font-size:13.5px;line-height:20px;color:#e2e2e2;letter-spacing:0.192px;">5</span>
<span class="t" style="left:352.30px;top:568px;font-size:10.5px;line-height:20px;color:#d0d0d0;letter-spacing:0.383px;">Default value: 5</span>
</div>
<div class="b" style="left:487.70px;top:303.30px;width:23.40px;height:23.40px;background:#005fcc;border-radius:50%;"></div>
<svg class="b" style="left:487.70px;top:303.00px;" width="24" height="24" viewBox="0 0 24 24"><path d="M13.500 8L9.400 12l4.100 4" fill="none" stroke="#f2f4fa" stroke-width="1.900" stroke-linecap="square" stroke-linejoin="miter"/></svg>
</div>
</body></html>
